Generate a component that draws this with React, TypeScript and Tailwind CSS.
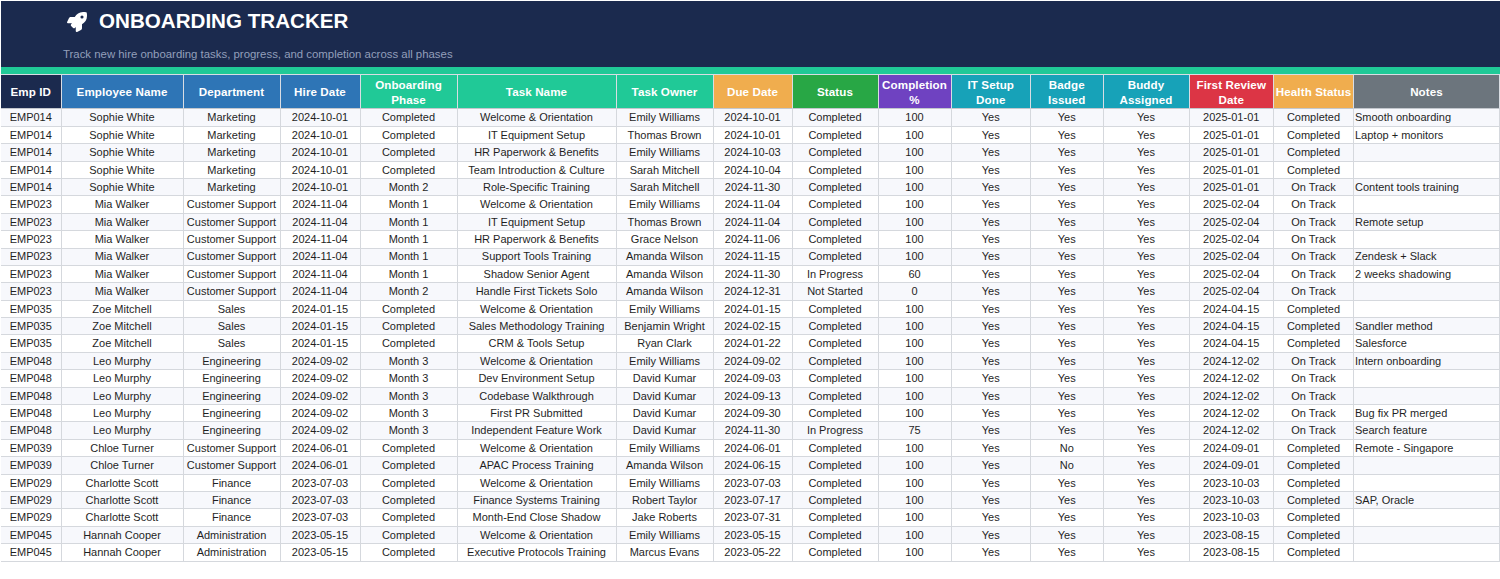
import { FaRocket } from 'react-icons/fa';

const HEADERS: { label: string; color: string }[] = [
  { label: 'Emp ID', color: 'bg-[#1b2a4e]' },
  { label: 'Employee Name', color: 'bg-[#2e75b6]' },
  { label: 'Department', color: 'bg-[#2e75b6]' },
  { label: 'Hire Date', color: 'bg-[#2e75b6]' },
  { label: 'Onboarding Phase', color: 'bg-[#20c997]' },
  { label: 'Task Name', color: 'bg-[#20c997]' },
  { label: 'Task Owner', color: 'bg-[#20c997]' },
  { label: 'Due Date', color: 'bg-[#f0ad4e]' },
  { label: 'Status', color: 'bg-[#28a745]' },
  { label: 'Completion %', color: 'bg-[#6f42c1]' },
  { label: 'IT Setup Done', color: 'bg-[#17a2b8]' },
  { label: 'Badge Issued', color: 'bg-[#17a2b8]' },
  { label: 'Buddy Assigned', color: 'bg-[#17a2b8]' },
  { label: 'First Review Date', color: 'bg-[#dc3545]' },
  { label: 'Health Status', color: 'bg-[#f0ad4e]' },
  { label: 'Notes', color: 'bg-[#6c757d]' },
];

type Employee = [string, string, string, string, string];

const SOPHIE: Employee = ['EMP014', 'Sophie White', 'Marketing', '2024-10-01', '2025-01-01'];
const MIA: Employee = ['EMP023', 'Mia Walker', 'Customer Support', '2024-11-04', '2025-02-04'];
const ZOE: Employee = ['EMP035', 'Zoe Mitchell', 'Sales', '2024-01-15', '2024-04-15'];
const LEO: Employee = ['EMP048', 'Leo Murphy', 'Engineering', '2024-09-02', '2024-12-02'];
const CHLOE: Employee = ['EMP039', 'Chloe Turner', 'Customer Support', '2024-06-01', '2024-09-01'];
const CHARLOTTE: Employee = ['EMP029', 'Charlotte Scott', 'Finance', '2023-07-03', '2023-10-03'];
const HANNAH: Employee = ['EMP045', 'Hannah Cooper', 'Administration', '2023-05-15', '2023-08-15'];

// employee, phase, task, owner, due, status, pct, badge, health, notes
type Row = [Employee, string, string, string, string, string, string, string, string, string];

const ROWS: Row[] = [
  [SOPHIE, 'Completed', 'Welcome & Orientation', 'Emily Williams', '2024-10-01', 'Completed', '100', 'Yes', 'Completed', 'Smooth onboarding'],
  [SOPHIE, 'Completed', 'IT Equipment Setup', 'Thomas Brown', '2024-10-01', 'Completed', '100', 'Yes', 'Completed', 'Laptop + monitors'],
  [SOPHIE, 'Completed', 'HR Paperwork & Benefits', 'Emily Williams', '2024-10-03', 'Completed', '100', 'Yes', 'Completed', ''],
  [SOPHIE, 'Completed', 'Team Introduction & Culture', 'Sarah Mitchell', '2024-10-04', 'Completed', '100', 'Yes', 'Completed', ''],
  [SOPHIE, 'Month 2', 'Role-Specific Training', 'Sarah Mitchell', '2024-11-30', 'Completed', '100', 'Yes', 'On Track', 'Content tools training'],
  [MIA, 'Month 1', 'Welcome & Orientation', 'Emily Williams', '2024-11-04', 'Completed', '100', 'Yes', 'On Track', ''],
  [MIA, 'Month 1', 'IT Equipment Setup', 'Thomas Brown', '2024-11-04', 'Completed', '100', 'Yes', 'On Track', 'Remote setup'],
  [MIA, 'Month 1', 'HR Paperwork & Benefits', 'Grace Nelson', '2024-11-06', 'Completed', '100', 'Yes', 'On Track', ''],
  [MIA, 'Month 1', 'Support Tools Training', 'Amanda Wilson', '2024-11-15', 'Completed', '100', 'Yes', 'On Track', 'Zendesk + Slack'],
  [MIA, 'Month 1', 'Shadow Senior Agent', 'Amanda Wilson', '2024-11-30', 'In Progress', '60', 'Yes', 'On Track', '2 weeks shadowing'],
  [MIA, 'Month 2', 'Handle First Tickets Solo', 'Amanda Wilson', '2024-12-31', 'Not Started', '0', 'Yes', 'On Track', ''],
  [ZOE, 'Completed', 'Welcome & Orientation', 'Emily Williams', '2024-01-15', 'Completed', '100', 'Yes', 'Completed', ''],
  [ZOE, 'Completed', 'Sales Methodology Training', 'Benjamin Wright', '2024-02-15', 'Completed', '100', 'Yes', 'Completed', 'Sandler method'],
  [ZOE, 'Completed', 'CRM & Tools Setup', 'Ryan Clark', '2024-01-22', 'Completed', '100', 'Yes', 'Completed', 'Salesforce'],
  [LEO, 'Month 3', 'Welcome & Orientation', 'Emily Williams', '2024-09-02', 'Completed', '100', 'Yes', 'On Track', 'Intern onboarding'],
  [LEO, 'Month 3', 'Dev Environment Setup', 'David Kumar', '2024-09-03', 'Completed', '100', 'Yes', 'On Track', ''],
  [LEO, 'Month 3', 'Codebase Walkthrough', 'David Kumar', '2024-09-13', 'Completed', '100', 'Yes', 'On Track', ''],
  [LEO, 'Month 3', 'First PR Submitted', 'David Kumar', '2024-09-30', 'Completed', '100', 'Yes', 'On Track', 'Bug fix PR merged'],
  [LEO, 'Month 3', 'Independent Feature Work', 'David Kumar', '2024-11-30', 'In Progress', '75', 'Yes', 'On Track', 'Search feature'],
  [CHLOE, 'Completed', 'Welcome & Orientation', 'Emily Williams', '2024-06-01', 'Completed', '100', 'No', 'Completed', 'Remote - Singapore'],
  [CHLOE, 'Completed', 'APAC Process Training', 'Amanda Wilson', '2024-06-15', 'Completed', '100', 'No', 'Completed', ''],
  [CHARLOTTE, 'Completed', 'Welcome & Orientation', 'Emily Williams', '2023-07-03', 'Completed', '100', 'Yes', 'Completed', ''],
  [CHARLOTTE, 'Completed', 'Finance Systems Training', 'Robert Taylor', '2023-07-17', 'Completed', '100', 'Yes', 'Completed', 'SAP, Oracle'],
  [CHARLOTTE, 'Completed', 'Month-End Close Shadow', 'Jake Roberts', '2023-07-31', 'Completed', '100', 'Yes', 'Completed', ''],
  [HANNAH, 'Completed', 'Welcome & Orientation', 'Emily Williams', '2023-05-15', 'Completed', '100', 'Yes', 'Completed', ''],
  [HANNAH, 'Completed', 'Executive Protocols Training', 'Marcus Evans', '2023-05-22', 'Completed', '100', 'Yes', 'Completed', ''],
];

function rowCells([emp, phase, task, owner, due, status, pct, badge, health, notes]: Row): string[] {
  return [emp[0], emp[1], emp[2], emp[3], phase, task, owner, due, status, pct, 'Yes', badge, 'Yes', emp[4], health, notes];
}

export default function App() {
  return (
    <div className="min-h-[579px] bg-white pt-px pl-px font-['Liberation_Sans',Arial,sans-serif]">
      <header className="h-[66px] bg-[#1b2a4e] pt-[8px] pl-[62px]">
        <div className="flex h-[25px] items-center gap-[12px]">
          <FaRocket className="ml-[4px] h-[20px] w-[20px] text-white" />
          <h1 className="text-[20.6px] leading-none font-bold text-white">ONBOARDING TRACKER</h1>
        </div>
        <p className="mt-[12px] text-[11.4px] leading-[16px] text-[#939fbb]">
          Track new hire onboarding tasks, progress, and completion across all phases
        </p>
      </header>
      <div className="h-[7px] bg-[#20c997]" />

      <div className="grid grid-cols-[60.5px_122px_97px_80px_97px_159px_97px_79px_86px_73px_79.5px_72.5px_86px_84.5px_80px_146px] grid-rows-[35.4px] auto-rows-[17.4px] text-[11px] text-[#1f1f1f]">
        {HEADERS.map((h) => (
          <div
            key={h.label}
            className={`flex items-center justify-center border-t border-r border-b border-t-[#d9dde3] border-r-[#d9dde3] border-b-[#c3c7cd] text-center text-[11.6px] leading-[15px] font-bold tracking-[0.1px] text-white ${h.color}`}
          >
            {h.label}
          </div>
        ))}
        {ROWS.map((row, rowIndex) =>
          rowCells(row).map((value, cellIndex) => (
            <div
              key={`${rowIndex}-${cellIndex}`}
              className={`flex items-center overflow-hidden border-r border-b border-[#d5d8dd] whitespace-nowrap ${
                cellIndex === 15 ? 'justify-start pl-[1px]' : 'justify-center'
              } ${rowIndex % 2 === 0 ? 'bg-[#f7f8fc]' : 'bg-white'}`}
            >
              {value}
            </div>
          )),
        )}
      </div>
    </div>
  );
}
